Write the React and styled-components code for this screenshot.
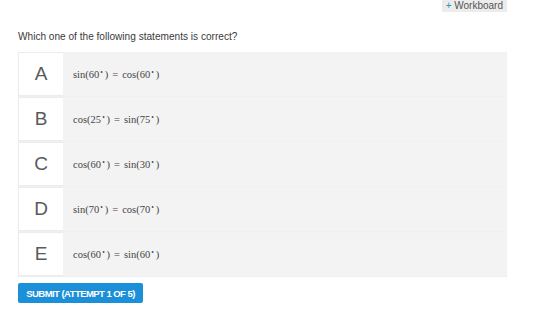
import React from "react";
import styled, { createGlobalStyle } from "styled-components";

const Global = createGlobalStyle`
  html, body { margin: 0; padding: 0; background: #fff; }
  body { font-family: "Liberation Sans", Arial, sans-serif; }
`;

const Page = styled.div`
  width: 541px;
  height: 316px;
  display: flex;
  flex-direction: column;
  padding: 0 34px 0 18px;
  box-sizing: border-box;
`;

const TopBar = styled.div`
  display: flex;
  justify-content: flex-end;
`;

const Workboard = styled.button`
  border: none;
  background: #ececec;
  font-family: "Liberation Sans", Arial, sans-serif;
  font-size: 10px;
  color: #555;
  padding: 0 4px;
  height: 12px;
  line-height: 12px;
  cursor: pointer;
  span { color: #2a8fd0; }
`;

const Question = styled.div`
  margin-top: 19px;
  font-size: 10.1px;
  color: #3a3a3a;
  line-height: 12px;
`;

const List = styled.div`
  margin-top: 9px;
  display: flex;
  flex-direction: column;
  gap: 1px;
`;

const Row = styled.div`
  display: flex;
  height: 44px;
  box-shadow: 0 1px 1px rgba(0, 0, 0, 0.06);
`;

const Letter = styled.div`
  width: 45px;
  flex: none;
  background: #fff;
  border: 1px solid #ececec;
  border-right: none;
  box-sizing: border-box;
  display: flex;
  align-items: center;
  justify-content: center;
  font-family: "Liberation Sans", Arial, sans-serif;
  font-size: 19px;
  color: #5a5a5a;
`;

const Content = styled.div`
  flex: 1;
  background: #f3f3f3;
  display: flex;
  align-items: center;
  padding-left: 10px;
  font-family: "Liberation Serif", "Times New Roman", serif;
  font-size: 10.5px;
  color: #444;
`;

const Deg = styled.sup`
  font-size: 5px;
  vertical-align: 4px;
  margin: 0 1.5px 0 1px;
`;

const Eq = styled.span`
  margin: 0 4px;
`;

const Submit = styled.button`
  align-self: flex-start;
  margin-top: 7px;
  height: 20px;
  width: 125px;
  border: none;
  border-radius: 2px;
  background: #1b8fd8;
  color: #fff;
  font-family: "Liberation Sans", Arial, sans-serif;
  font-weight: bold;
  font-size: 9.5px;
  letter-spacing: -0.55px;
  padding: 0;
  cursor: pointer;
`;

const options = [
  ["A", ["sin", "60"], ["cos", "60"]],
  ["B", ["cos", "25"], ["sin", "75"]],
  ["C", ["cos", "60"], ["sin", "30"]],
  ["D", ["sin", "70"], ["cos", "70"]],
  ["E", ["cos", "60"], ["sin", "60"]],
];

const Term = ({ fn, v }) => (
  <span>
    {fn}({v}
    <Deg>∘</Deg>)
  </span>
);

export default function App() {
  return (
    <>
      <Global />
      <Page>
        <TopBar>
          <Workboard>
            <span>+</span> Workboard
          </Workboard>
        </TopBar>
        <Question>Which one of the following statements is correct?</Question>
        <List>
          {options.map(([l, a, b]) => (
            <Row key={l}>
              <Letter>{l}</Letter>
              <Content>
                <Term fn={a[0]} v={a[1]} />
                <Eq>=</Eq>
                <Term fn={b[0]} v={b[1]} />
              </Content>
            </Row>
          ))}
        </List>
        <Submit>SUBMIT (ATTEMPT 1 OF 5)</Submit>
      </Page>
    </>
  );
}
